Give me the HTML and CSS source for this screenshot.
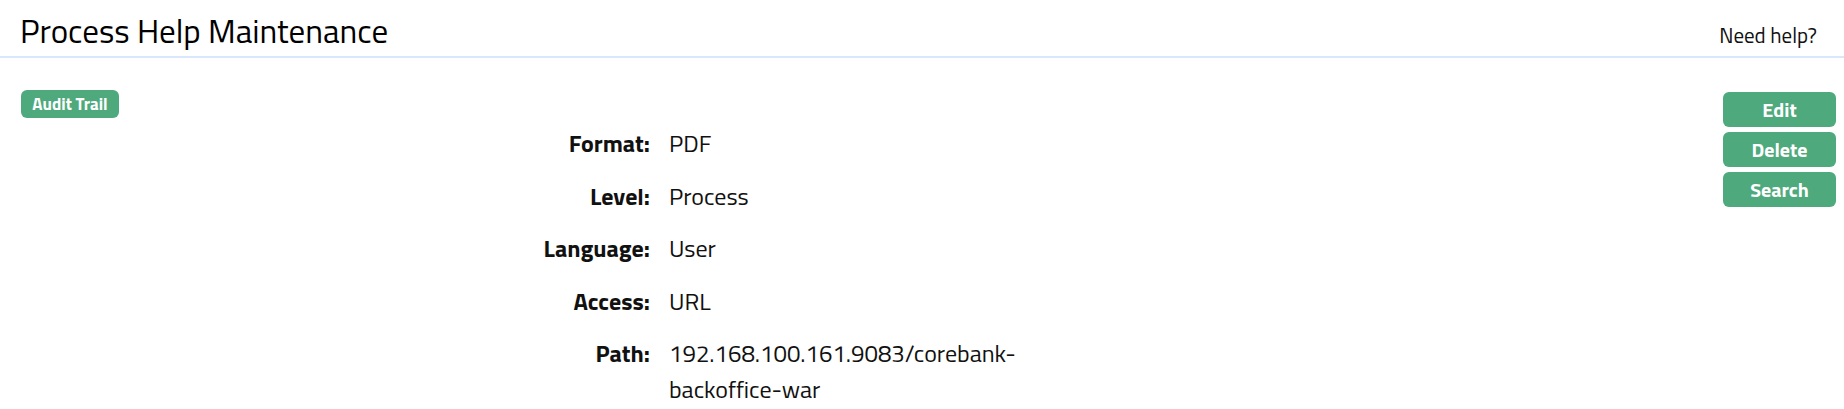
FILE: index.html
```html
<!DOCTYPE html>
<html lang="en">
<head>
    <meta charset="UTF-8">
    <meta name="viewport" content="width=device-width, initial-scale=1.0">
    <title>Process Help Maintenance</title>
    <link rel="stylesheet" href="styles.css">
</head>
<body>
    <div class="header">
        <h1 class="title">Process Help Maintenance</h1>
        <a class="help" href="#">Need help?</a>
    </div>

    <div class="page">
        <div class="content">
            <button class="btn btnSmall" type="button">Audit Trail</button>

            <!-- 상세 정보 -->
            <div class="details">
                <div class="label">Format:</div>
                <div class="value">PDF</div>

                <div class="label">Level:</div>
                <div class="value">Process</div>

                <div class="label">Language:</div>
                <div class="value">User</div>

                <div class="label">Access:</div>
                <div class="value">URL</div>

                <div class="label">Path:</div>
                <div class="value">192.168.100.161.9083/corebank-backoffice-war</div>
            </div>
        </div>

        <div class="actions">
            <button class="btn" type="button">Edit</button>
            <button class="btn" type="button">Delete</button>
            <button class="btn" type="button">Search</button>
        </div>
    </div>
</body>
</html>
```

FILE: styles.css
```css
body{
    margin: 0;
    font-family: "Titillium Web", Roboto, "Liberation Sans", sans-serif;
    color: #111;
    background: #fff;
}
/* 상단 제목 */
.header{
    display: flex;
    justify-content: space-between;
    align-items: baseline;
    padding: 12px 27px 5px 20px;
    border-bottom: 2px solid #dae6fb;
}
.title{
    margin: 0;
    font-size: 33px;
    font-weight: 400;
    line-height: 38px;
    color: #000;
}
.help{
    font-size: 21px;
    color: #111;
    text-decoration: none;
}
/* 본문 */
.page{
    display: flex;
    align-items: flex-start;
    padding: 32px 8px 0 21px;
}
.content{
    flex: 1;
}
.btn{
    display: block;
    width: 113px;
    height: 35px;
    padding: 0;
    border: none;
    border-radius: 6px;
    background: #4ea97c;
    color: #fff;
    font-family: inherit;
    font-size: 20px;
    font-weight: bold;
    cursor: pointer;
}
.btnSmall{
    width: 98px;
    height: 28px;
    font-size: 17px;
}
.details{
    display: grid;
    grid-template-columns: 629px 380px;
    column-gap: 19px;
    row-gap: 16.5px;
    margin-top: 7px;
    font-size: 24px;
    line-height: 36px;
}
.label{
    text-align: right;
    font-weight: bold;
}
.actions{
    display: flex;
    flex-direction: column;
    gap: 5px;
    margin-top: 2px;
}
```
